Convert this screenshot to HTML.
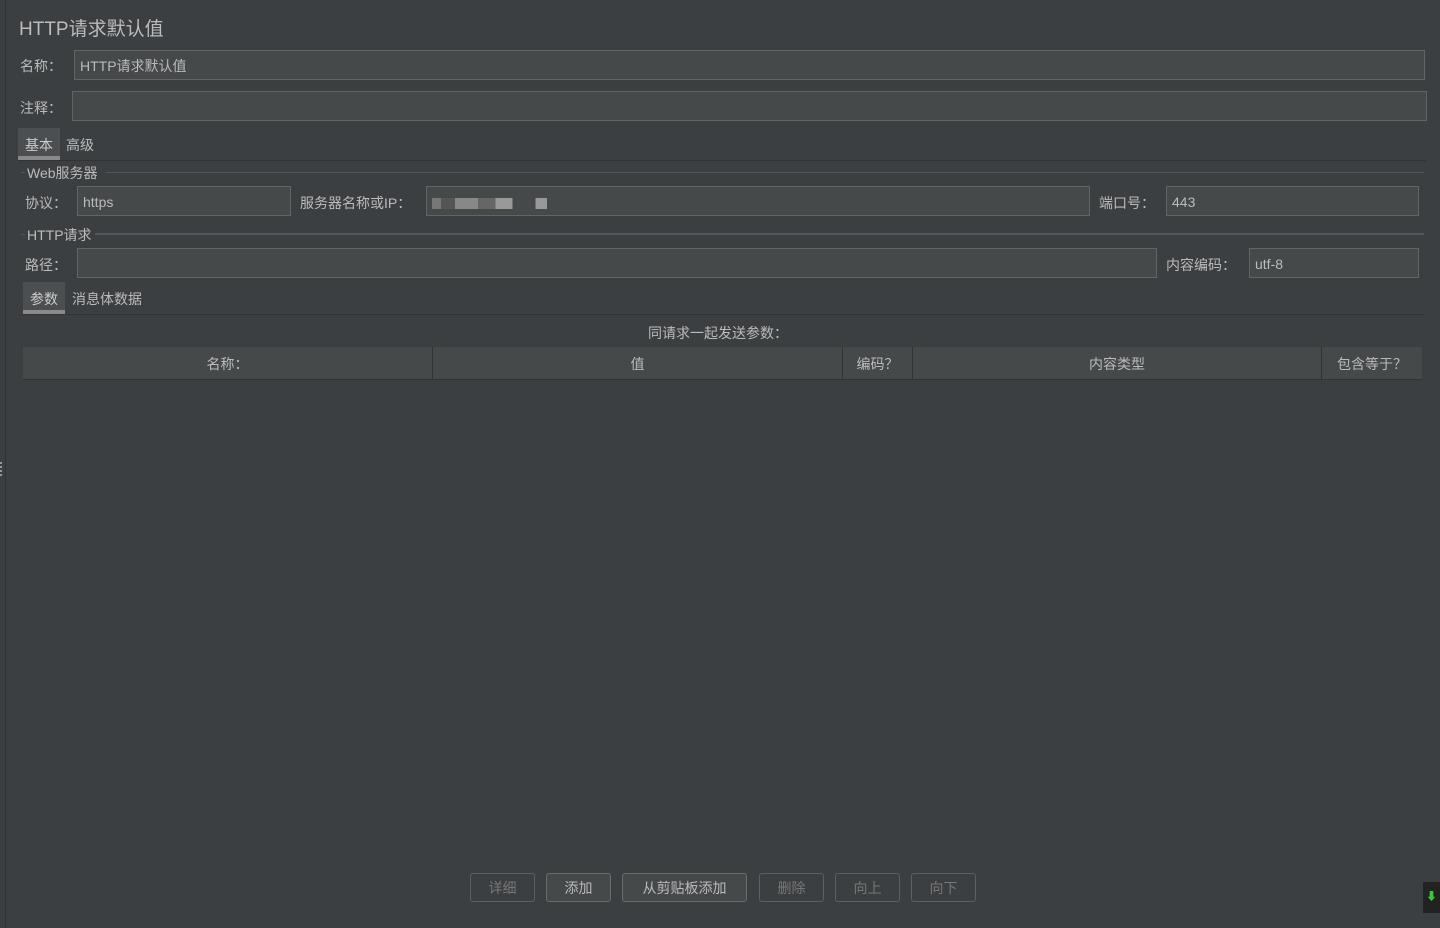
<!DOCTYPE html>
<html><head><meta charset="utf-8"><style>
body{margin:0;width:1440px;height:928px;background:#3c3f41;font-family:"Liberation Sans","Noto Sans CJK SC",sans-serif;font-size:14px;color:#bbbbbb;position:relative;overflow:hidden}
.a{position:absolute;white-space:nowrap}
.f{position:absolute;background:#45494a;border:1px solid #646464;box-sizing:border-box;padding-left:5px;line-height:30px;color:#bbbbbb}
.ln{position:absolute;height:1px;background:#555}
.btn{position:absolute;top:873px;height:29px;border:1px solid #5e6060;border-radius:3px;box-sizing:border-box;text-align:center;line-height:29px;color:#777}
.btn.on{border-color:#6b6b6b;background:#45494a;color:#bbb}
.th{position:absolute;top:347px;height:32px;line-height:34px;text-align:center;background:#45494a;border-right:1px solid #333;box-sizing:border-box}
</style></head><body>
<div style="position:absolute;left:5px;top:0;width:1px;height:928px;background:#2f3133"></div>
<div class="a" style="left:19px;top:14px;font-size:19px;color:#bbb">HTTP请求默认值</div>
<div class="a" style="left:20px;top:56px">名称：</div>
<div class="f" style="left:74px;top:50px;width:1351px;height:30px">HTTP请求默认值</div>
<div class="a" style="left:20px;top:98px">注释：</div>
<div class="f" style="left:72px;top:91px;width:1355px;height:30px"></div>
<div class="a" style="left:18px;top:128px;width:42px;height:28px;background:#4b4f51;border-bottom:4px solid #8a8a8a"></div>
<div class="a" style="left:25px;top:135px;color:#ccc">基本</div>
<div class="a" style="left:66px;top:135px">高级</div>
<div class="ln" style="left:18px;top:160px;width:1408px;background:#333"></div>
<div class="ln" style="left:21px;top:172px;width:4px"></div>
<div class="a" style="left:27px;top:163px">Web服务器</div>
<div class="ln" style="left:106px;top:172px;width:1318px"></div>
<div class="a" style="left:25px;top:193px">协议：</div>
<div class="f" style="left:77px;top:186px;width:214px;height:30px">https</div>
<div class="a" style="left:300px;top:193px">服务器名称或IP：</div>
<div class="f" style="left:426px;top:186px;width:664px;height:30px"><span style="display:inline-block;vertical-align:middle;width:115px;height:11px;background:linear-gradient(90deg,#777 0 8%,#555 8% 20%,#888 20% 40%,#666 40% 55%,#999 55% 70%,#45494a 70% 90%,#999 90%)"></span></div>
<div class="a" style="left:1099px;top:193px">端口号：</div>
<div class="f" style="left:1166px;top:186px;width:253px;height:30px">443</div>
<div class="ln" style="left:21px;top:234px;width:4px"></div>
<div class="a" style="left:27px;top:225px">HTTP请求</div>
<div class="ln" style="left:95px;top:233px;width:1329px;height:2px"></div>
<div class="a" style="left:25px;top:255px">路径：</div>
<div class="f" style="left:77px;top:248px;width:1080px;height:30px"></div>
<div class="a" style="left:1166px;top:255px">内容编码：</div>
<div class="f" style="left:1249px;top:248px;width:170px;height:30px">utf-8</div>
<div class="a" style="left:23px;top:282px;width:42px;height:28px;background:#4b4f51;border-bottom:4px solid #8a8a8a"></div>
<div class="a" style="left:30px;top:289px;color:#ccc">参数</div>
<div class="a" style="left:72px;top:289px">消息体数据</div>
<div class="ln" style="left:23px;top:314px;width:1400px;background:#333"></div>
<div class="a" style="left:648px;top:323px">同请求一起发送参数：</div>
<div class="th" style="left:23px;width:410px">名称：</div>
<div class="th" style="left:433px;width:410px">值</div>
<div class="th" style="left:843px;width:70px">编码？</div>
<div class="th" style="left:913px;width:409px">内容类型</div>
<div class="th" style="left:1322px;width:100px;border:none">包含等于？</div>
<div class="ln" style="left:23px;top:379px;width:1399px;background:#333"></div>
<div class="btn" style="left:470px;width:65px">详细</div>
<div class="btn on" style="left:546px;width:65px">添加</div>
<div class="btn on" style="left:622px;width:125px">从剪贴板添加</div>
<div class="btn" style="left:759px;width:65px">删除</div>
<div class="btn" style="left:835px;width:65px">向上</div>
<div class="btn" style="left:911px;width:65px">向下</div>
<div class="a" style="left:1423px;top:882px;width:17px;height:31px;background:#222;color:#3c3;font-size:11px;text-align:center;line-height:31px">⬇</div>
<div class="a" style="left:0;top:462px;width:2px;height:14px;border-left:2px dotted #999"></div>
</body></html>
